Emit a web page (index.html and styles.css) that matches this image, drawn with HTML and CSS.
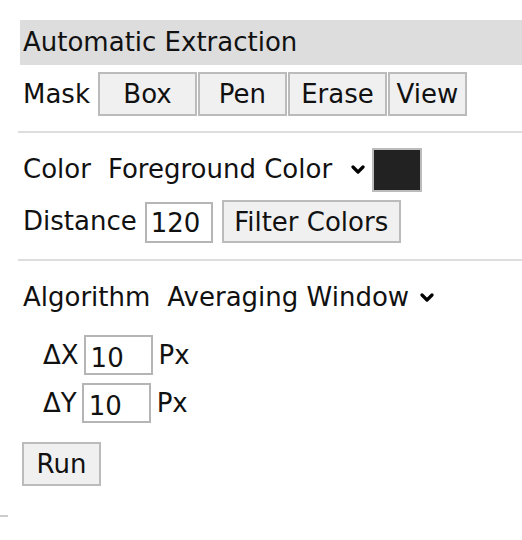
FILE: index.html
```html
<!DOCTYPE html>
<html>
<head>
<meta charset="utf-8">
<link rel="stylesheet" href="styles.css">
</head>
<body>
<div class="panel">
  <div class="title">Automatic Extraction</div>
  <div class="row row-mask">
    <span class="label label-mask">Mask</span>
    <div class="tools">
      <button class="btn tool tool-box">Box</button>
      <button class="btn tool tool-pen">Pen</button>
      <button class="btn tool tool-erase">Erase</button>
      <button class="btn tool tool-view">View</button>
    </div>
  </div>
  <div class="rule"></div>
  <div class="row row-color">
    <span class="label label-color">Color</span>
    <span class="select select-color">Foreground Color<svg class="chev" width="14" height="10" viewBox="0 0 14 10"><path d="M2 2 L7 7 L12 2" fill="none" stroke="#000" stroke-width="3.2" stroke-linecap="round" stroke-linejoin="round"/></svg></span>
    <span class="swatch"></span>
  </div>
  <div class="row row-distance">
    <span class="label label-distance">Distance</span>
    <input class="field field-distance" type="text" value="120">
    <button class="btn filter">Filter Colors</button>
  </div>
  <div class="rule rule-2"></div>
  <div class="row row-algo">
    <span class="label label-algo">Algorithm</span>
    <span class="select">Averaging Window<svg class="chev" width="14" height="10" viewBox="0 0 14 10"><path d="M2 2 L7 7 L12 2" fill="none" stroke="#000" stroke-width="3.2" stroke-linecap="round" stroke-linejoin="round"/></svg></span>
  </div>
  <div class="row row-delta row-dx">
    <span class="dlabel">ΔX</span>
    <input class="field field-delta" type="text" value="10">
    <span class="unit">Px</span>
  </div>
  <div class="row row-delta row-dy">
    <span class="dlabel">ΔY</span>
    <input class="field field-delta" type="text" value="10">
    <span class="unit">Px</span>
  </div>
  <button class="btn run">Run</button>
  <div class="tail"></div>
</div>
</body>
</html>
```
FILE: styles.css
```css
* { box-sizing: border-box; }
html, body { margin: 0; padding: 0; background: #fff; }
body {
  font-family: "DejaVu Sans", Verdana, sans-serif;
  font-size: 26px;
  color: #111;
}
.panel {
  padding: 20px 0 0 20px;
  display: flex;
  flex-direction: column;
  align-items: flex-start;
}
.title {
  align-self: stretch;
  background: #dddddd;
  height: 45px;
  line-height: 45px;
  padding-left: 3px;
  white-space: nowrap;
}
.row {
  display: flex;
  white-space: nowrap;
}
.label { padding-left: 3px; }
.btn {
  font: inherit;
  color: #111;
  background: #f0f0f0;
  border: 2px solid #bbbbbb;
  border-radius: 0;
  padding: 0;
  margin: 0;
  text-align: center;
}
.row-mask {
  margin-top: 7px;
  height: 44px;
  align-items: center;
}
.label-mask { margin-right: 8px; }
.tools { display: flex; gap: 1px; }
.tool { height: 44px; }
.tool-box { width: 99px; }
.tool-pen { width: 89px; }
.tool-erase { width: 99px; }
.tool-view { width: 79px; }
.rule {
  align-self: stretch;
  margin-left: -2px;
  margin-top: 15px;
  height: 2px;
  background: #dddddd;
}
.row-color {
  margin-top: 15px;
  height: 44px;
  align-items: center;
}
.label-color { margin-right: 17px; margin-top: -2px; }
.select { display: inline-flex; align-items: center; }
.select-color { margin-top: -2px; }
.chev { margin-left: 11px; margin-top: 2px; }
.select-color .chev { margin-left: 19px; }
.swatch {
  margin-left: 7px;
  width: 50px;
  height: 44px;
  border: 2px solid #bbbbbb;
  background: #222222;
}
.row-distance {
  margin-top: 8px;
  height: 43px;
  align-items: flex-end;
}
.label-distance { line-height: 43px; margin-right: 8px; }
.field {
  font: inherit;
  color: #111;
  border: 2px solid #b5b5b5;
  border-radius: 0;
  background: #fff;
  margin: 0;
  outline: none;
}
.field-distance {
  width: 68px;
  height: 41px;
  padding: 0 0 0 4px;
}
.filter {
  margin-left: 9px;
  width: 179px;
  height: 43px;
}
.rule-2 { margin-top: 16px; }
.row-algo {
  margin-top: 21px;
  line-height: 30px;
}
.label-algo { margin-right: 17px; }
.row-delta {
  height: 40px;
  align-items: center;
  padding-left: 23px;
}
.row-dx { margin-top: 23px; }
.row-dy { margin-top: 8px; }
.dlabel { margin-right: 5px; }
.field-delta {
  width: 69px;
  height: 40px;
  padding: 6px 0 0 5px;
}
.unit { margin-left: 6px; }
.run {
  margin-top: 19px;
  margin-left: 2px;
  width: 79px;
  height: 44px;
}
.tail {
  margin-top: 29px;
  margin-left: -20px;
  width: 8px;
  height: 2px;
  background: #cccccc;
}
```
